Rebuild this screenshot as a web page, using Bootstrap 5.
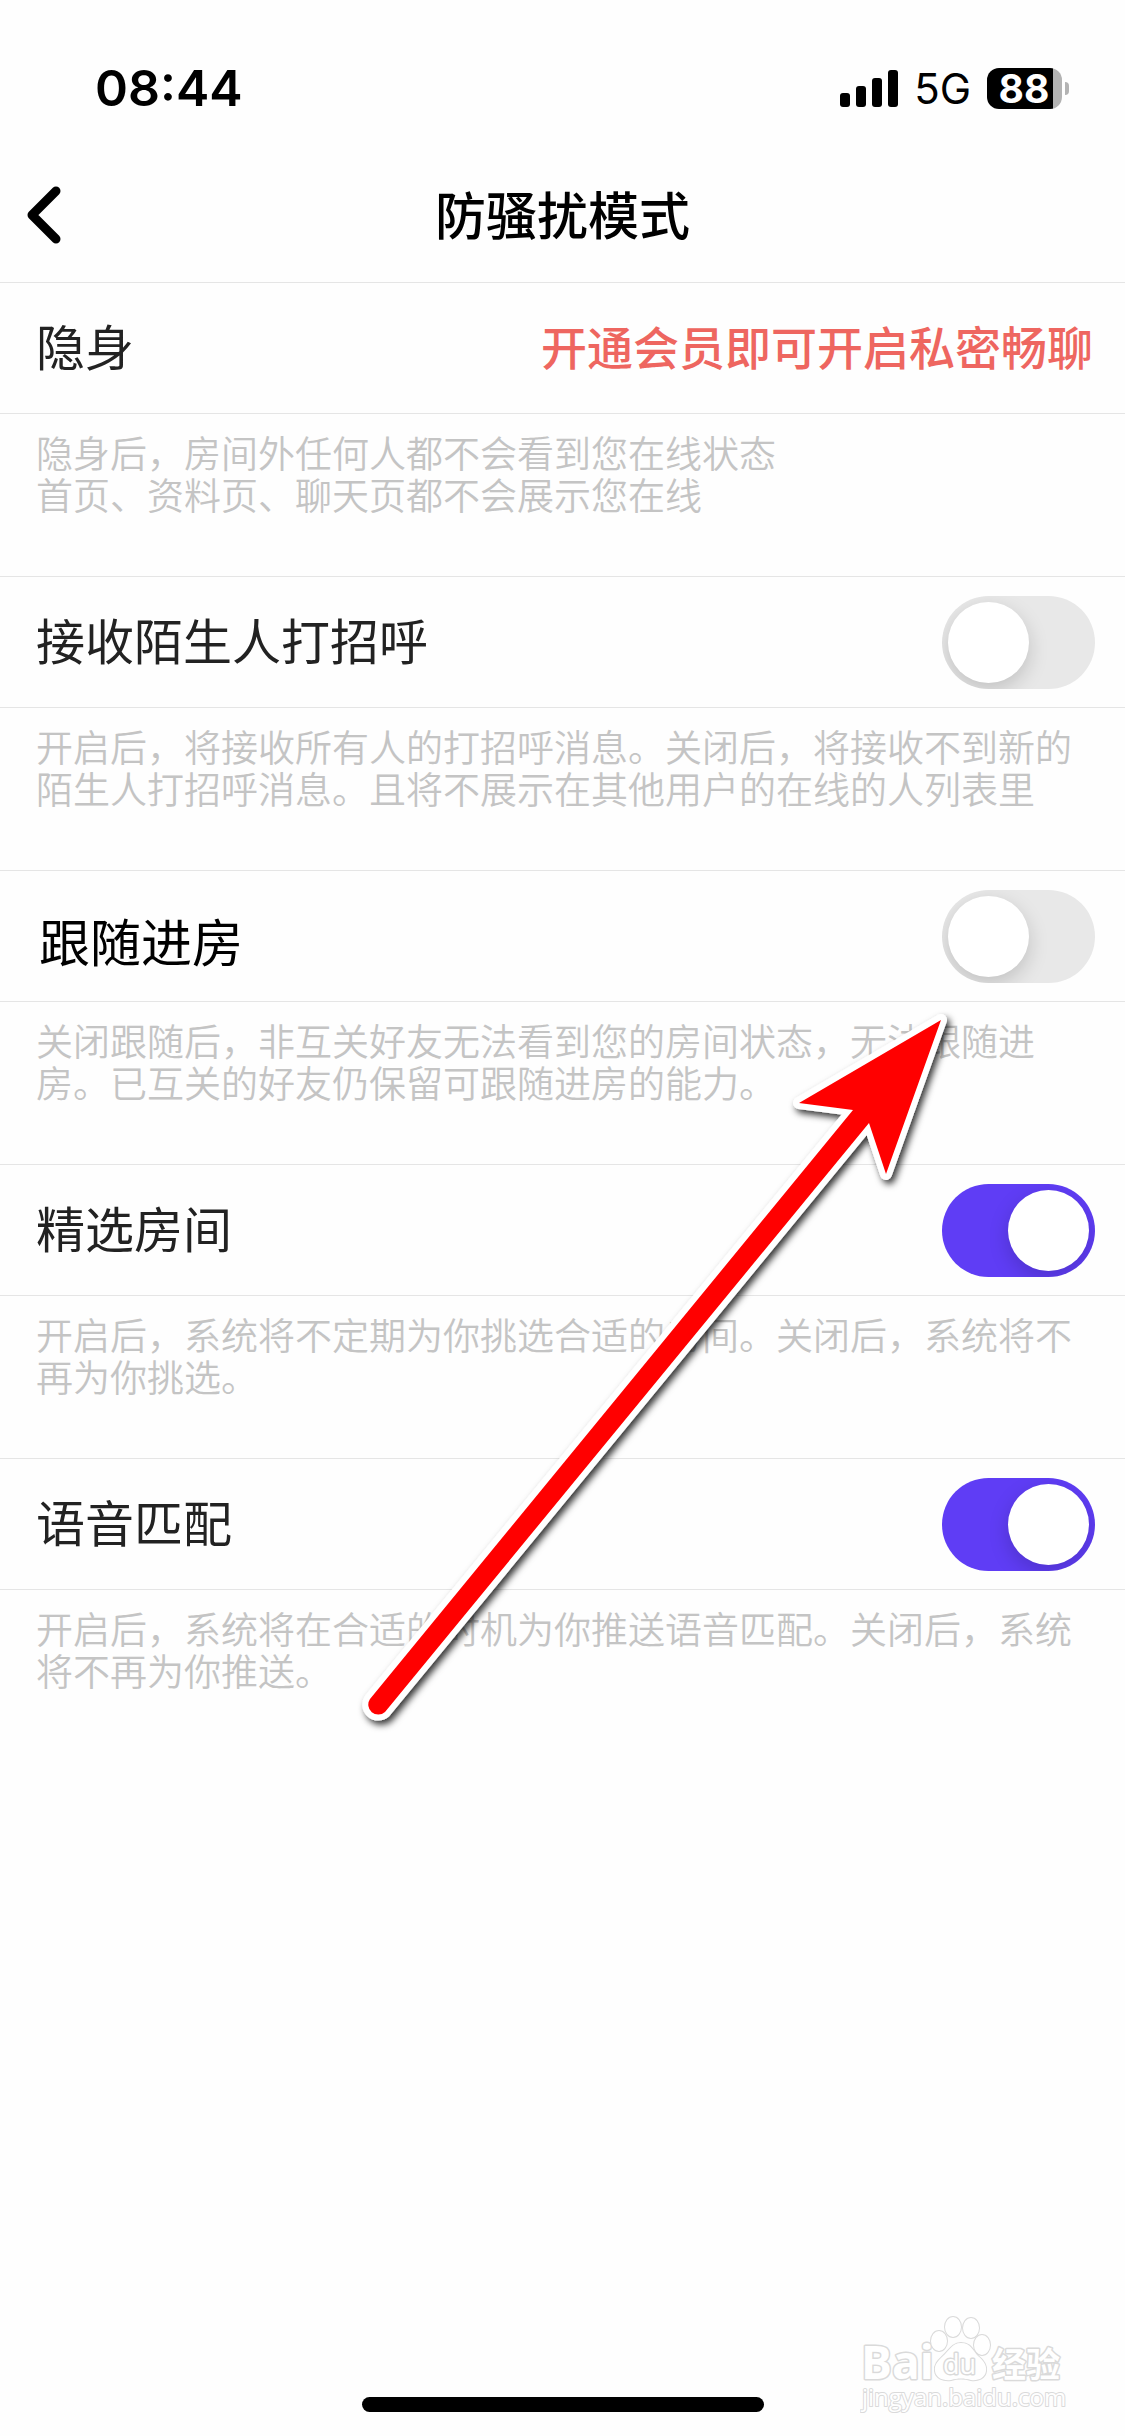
<!DOCTYPE html>
<html lang="zh-CN">
<head>
<meta charset="utf-8">
<meta name="viewport" content="width=device-width, initial-scale=1">
<title>防骚扰模式</title>
<link href="https://cdn.jsdelivr.net/npm/bootstrap@5.3.0/dist/css/bootstrap.min.css" rel="stylesheet">
<style>
body { font-family: "Noto Sans CJK SC", sans-serif; background: #fefefe; color: #222; }
.status-bar { height: 148px; padding: 28px 56px 0 95px; font-family: Inter, "Liberation Sans", sans-serif; color: #000; line-height: 1; }
.clock { font-size: 50px; font-weight: 600; }
.network { font-size: 42px; margin: 2px 16px 0 16px; }
.battery { width: 75px; height: 41px; border-radius: 12px; background: linear-gradient(90deg, #000 66px, #b3b3b3 66px); color: #fff; font-size: 39px; font-weight: 700; padding-right: 1px; }
.battery-tip { width: 4px; height: 13px; margin-left: 3px; border-radius: 0 6px 6px 0; background: #b3b3b3; }
.title-bar { height: 135px; border-bottom: 1px solid #e5e5e5; color: #000; }
.title-bar h1 { font-size: 51px; font-weight: 500; line-height: 60px; padding-bottom: 4px; }
.back { left: 19px; padding: 8px; }
.setting { height: 131px; padding: 0 30px 0 36px; border-bottom: 1px solid #e5e5e5; }
.setting-name { font-size: 49px; line-height: 60px; padding-bottom: 6px; }
.setting-name.highlight { font-size: 51px; color: #000; padding: 7px 0 0 3px; }
.vip { font-size: 46px; line-height: 60px; font-weight: 500; color: #ee6660; padding: 0 2px 6px 0; }
.vip:hover { color: #ee6660; }
.hint { min-height: 163px; padding: 17px 36px 0; font-size: 37px; line-height: 42px; font-weight: 350; color: #c4c4c4; }
.hint.ruled { border-bottom: 1px solid #e5e5e5; }
.form-switch .toggle { width: 153px; height: 93px; margin: 0; border: 0; border-radius: 47px; background: #e8e8e8; position: relative; overflow: clip; }
.form-switch .toggle::before { content: ""; position: absolute; top: 6px; left: 6px; width: 81px; height: 81px; border-radius: 50%; background: #fff; box-shadow: 0 7px 20px rgba(0, 0, 0, .17); }
.form-switch .toggle:checked { background: #5f3df5; }
.form-switch .toggle:checked::before { left: 66px; }
.pointer { top: 0; left: 0; pointer-events: none; }
.watermark { right: 50px; bottom: 9px; }
.watermark text { font-family: "Open Sans", "Noto Sans CJK SC", sans-serif; }
.home-bar { width: 402px; height: 15px; border-radius: 8px; background: #000; margin-bottom: 24px; }
</style>
<script src="https://cdn.jsdelivr.net/npm/bootstrap@5.3.0/dist/js/bootstrap.bundle.min.js"></script>
</head>
<body>
<div class="position-relative min-vh-100 d-flex flex-column overflow-hidden">
  <div class="status-bar d-flex align-items-center justify-content-between">
    <span class="clock">08:44</span>
    <div class="d-flex align-items-center">
      <svg width="58" height="37" viewBox="0 0 58 37" aria-hidden="true">
        <rect x="0" y="23" width="10" height="14" rx="3"/><rect x="16" y="16" width="10" height="21" rx="3"/><rect x="32" y="8" width="10" height="29" rx="3"/><rect x="48" y="0" width="10" height="37" rx="3"/>
      </svg>
      <span class="network">5G</span>
      <span class="battery d-flex align-items-center justify-content-center">88</span>
      <span class="battery-tip"></span>
    </div>
  </div>
  <header class="title-bar position-relative d-flex align-items-center justify-content-center">
    <button type="button" class="btn back position-absolute border-0 lh-1" aria-label="返回">
      <svg width="34" height="58" viewBox="0 0 34 58" fill="none" stroke="#000" stroke-width="9" stroke-linecap="round" stroke-linejoin="round"><path d="M29 5 5 29l24 24"/></svg>
    </button>
    <h1 class="m-0">防骚扰模式</h1>
  </header>
  <main>
    <section>
      <div class="setting d-flex align-items-center justify-content-between">
        <span class="setting-name">隐身</span>
        <a href="#" class="vip text-decoration-none">开通会员即可开启私密畅聊</a>
      </div>
      <p class="hint ruled m-0">隐身后，房间外任何人都不会看到您在线状态<br>首页、资料页、聊天页都不会展示您在线</p>
    </section>
    <section>
      <div class="setting form-switch d-flex align-items-center justify-content-between">
        <label class="setting-name" for="greet">接收陌生人打招呼</label>
        <input class="form-check-input toggle" type="checkbox" role="switch" id="greet">
      </div>
      <p class="hint ruled m-0">开启后，将接收所有人的打招呼消息。关闭后，将接收不到新的陌生人打招呼消息。且将不展示在其他用户的在线的人列表里</p>
    </section>
    <section>
      <div class="setting form-switch d-flex align-items-center justify-content-between">
        <label class="setting-name highlight" for="follow">跟随进房</label>
        <input class="form-check-input toggle" type="checkbox" role="switch" id="follow">
      </div>
      <p class="hint ruled m-0">关闭跟随后，非互关好友无法看到您的房间状态，无法跟随进房。已互关的好友仍保留可跟随进房的能力。</p>
    </section>
    <section>
      <div class="setting form-switch d-flex align-items-center justify-content-between">
        <label class="setting-name" for="featured">精选房间</label>
        <input class="form-check-input toggle" type="checkbox" role="switch" id="featured" checked>
      </div>
      <p class="hint ruled m-0">开启后，系统将不定期为你挑选合适的房间。关闭后，系统将不再为你挑选。</p>
    </section>
    <section>
      <div class="setting form-switch d-flex align-items-center justify-content-between">
        <label class="setting-name" for="voice">语音匹配</label>
        <input class="form-check-input toggle" type="checkbox" role="switch" id="voice" checked>
      </div>
      <p class="hint m-0">开启后，系统将在合适的时机为你推送语音匹配。关闭后，系统将不再为你推送。</p>
    </section>
  </main>
  <div class="home-bar mt-auto mx-auto"></div>

  <svg class="pointer position-absolute" width="1000" height="1760" viewBox="0 0 1000 1760" aria-hidden="true">
    <defs><filter id="drop" x="-10%" y="-10%" width="120%" height="120%"><feDropShadow dx="3" dy="4" stdDeviation="3.5" flood-color="#000" flood-opacity=".8"/></filter></defs>
    <path d="M941 1020 799 1103 853 1110 370 1699A10 10 0 0 0 385 1712L869 1123 886 1174Z" fill="#f00" stroke="#fff" stroke-width="12" stroke-linejoin="round" paint-order="stroke" filter="url(#drop)"/>
  </svg>

  <svg class="watermark position-absolute" width="215" height="114" viewBox="0 0 215 114" fill="#fff" stroke="#dadada" stroke-width="3" stroke-linejoin="round" paint-order="stroke" aria-label="Baidu 经验">
    <text x="1" y="66" font-size="46" font-weight="700">Bai</text>
    <g stroke-width="2">
      <ellipse cx="79" cy="28" rx="8" ry="10"/><ellipse cx="93" cy="14" rx="8" ry="10"/><ellipse cx="111" cy="15" rx="8" ry="10"/><ellipse cx="122" cy="32" rx="8" ry="10"/>
      <path d="M101 30c10 0 12 8 17 13 5 4 9 9 8 15-1 7-8 10-15 9-7-2-13-2-20 0-8 1-15-2-16-9-1-7 4-11 8-15 6-5 9-13 18-13Z"/>
    </g>
    <text x="83" y="61" font-size="27">du</text>
    <text x="132" y="64" font-size="34" font-weight="700">经验</text>
    <text x="2" y="93" font-size="24" stroke-width="2">jingyan.baidu.com</text>
  </svg>
</div>
</body>
</html>
